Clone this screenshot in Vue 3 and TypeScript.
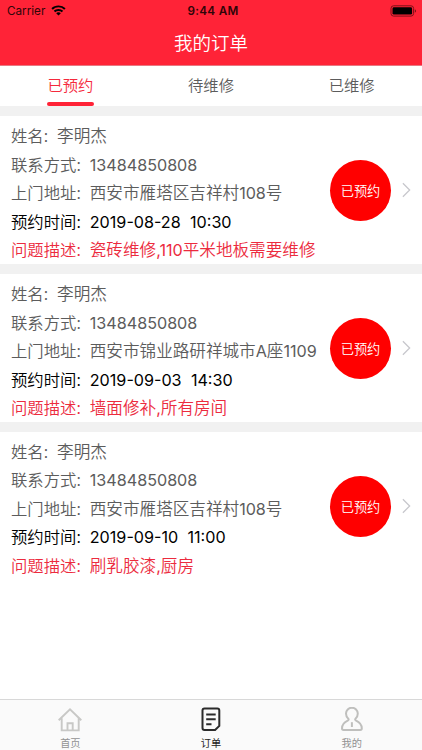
<script setup lang="ts">
interface Piece {
  text: string
  latin?: boolean
}
interface Order {
  name: string
  phone: string
  address: Piece[]
  date: string
  time: string
  issue: Piece[]
}

const tabs = ['已预约', '待维修', '已维修']

const orders: Order[] = [
  {
    name: '李明杰',
    phone: '13484850808',
    address: [{ text: '西安市雁塔区吉祥村' }, { text: '108', latin: true }, { text: '号' }],
    date: '2019-08-28',
    time: '10:30',
    issue: [{ text: '瓷砖维修' }, { text: ',110', latin: true }, { text: '平米地板需要维修' }],
  },
  {
    name: '李明杰',
    phone: '13484850808',
    address: [{ text: '西安市锦业路研祥城市' }, { text: 'A', latin: true }, { text: '座' }, { text: '1109', latin: true }],
    date: '2019-09-03',
    time: '14:30',
    issue: [{ text: '墙面修补' }, { text: ',', latin: true }, { text: '所有房间' }],
  },
  {
    name: '李明杰',
    phone: '13484850808',
    address: [{ text: '西安市雁塔区吉祥村' }, { text: '108', latin: true }, { text: '号' }],
    date: '2019-09-10',
    time: '11:00',
    issue: [{ text: '刷乳胶漆' }, { text: ',', latin: true }, { text: '厨房' }],
  },
]
</script>

<template>
  <div class="screen">
    <header class="header">
      <div class="status">
        <div class="carrier">
          <span>Carrier</span>
          <svg width="15" height="11" viewBox="0 0 15 11">
            <path d="M7.5 .4C4.7.4 2.2 1.4.4 3.2l1.4 1.5a8.1 8.1 0 0 1 11.4 0l1.4-1.5A10 10 0 0 0 7.5.4z" />
            <path d="M7.5 3.9c-1.8 0-3.5.7-4.7 1.9l1.4 1.5a4.7 4.7 0 0 1 6.6 0l1.4-1.5a6.8 6.8 0 0 0-4.7-1.9z" />
            <path d="M7.5 7.3c-.9 0-1.7.3-2.3.9l2.3 2.4 2.3-2.4c-.6-.6-1.4-.9-2.3-.9z" />
          </svg>
        </div>
        <div class="clock">9:44 AM</div>
        <svg class="battery" width="27" height="12" viewBox="0 0 27 12">
          <rect x="1" y=".8" width="22.6" height="10.3" rx="2.6" fill="none" stroke="#7d1018" stroke-width="1" />
          <rect x="2.5" y="2.3" width="19.6" height="7.3" rx="1.4" />
          <path d="M24.8 4.3c1.7.5 1.7 2.9 0 3.4z" fill="#7d1018" />
        </svg>
      </div>
      <h1 class="title">我的订单</h1>
    </header>

    <nav class="tabs">
      <div v-for="(tab, i) in tabs" :key="tab" class="tab" :class="{ active: i === 0 }">
        <span>{{ tab }}</span>
        <i class="underline"></i>
      </div>
    </nav>

    <main class="list">
      <article v-for="order in orders" :key="order.date" class="card">
        <div class="info">
          <div class="row"><span class="label">姓名:</span><span>{{ order.name }}</span></div>
          <div class="row"><span class="label">联系方式:</span><span class="latin">{{ order.phone }}</span></div>
          <div class="row">
            <span class="label">上门地址:</span>
            <span v-for="(p, i) in order.address" :key="i" :class="{ latin: p.latin }">{{ p.text }}</span>
          </div>
          <div class="row dark">
            <span class="label">预约时间:</span>
            <span class="latin">{{ order.date }}</span>
            <span class="latin time">{{ order.time }}</span>
          </div>
          <div class="row red">
            <span class="label">问题描述:</span>
            <span v-for="(p, i) in order.issue" :key="i" :class="{ latin: p.latin }">{{ p.text }}</span>
          </div>
        </div>
        <div class="action">
          <div class="badge">已预约</div>
          <svg width="10" height="18" viewBox="0 0 10 18">
            <path d="M1 1.5 8.5 9 1 16.5" fill="none" stroke="#c7c7cc" stroke-width="1.4" />
          </svg>
        </div>
      </article>
    </main>

    <footer class="tabbar">
      <div class="item">
        <svg width="26" height="26" viewBox="0 0 26 26" fill="none" stroke="#c8c8c6" stroke-width="1.9">
          <path d="M1.7 13.2 13 2.4l11.3 10.800M4.700 11.200v12.200h17V11.200M10.500 23.200v-7h5.200v7" />
        </svg>
        <span>首页</span>
      </div>
      <div class="item current">
        <svg width="26" height="26" viewBox="0 0 26 26" fill="none" stroke="#2b2b2b" stroke-width="2">
          <path d="M6.500 1.400h12.800a2 2 0 0 1 2 2v15.500l-4.200 4.100H6.500a2 2 0 0 1-2-2V3.400a2 2 0 0 1 2-2z" />
          <path d="M8.200 7.500h9.500M8.200 12.300h9.500M8.200 17.200h5.300" />
        </svg>
        <span>订单</span>
      </div>
      <div class="item">
        <svg width="26" height="26" viewBox="0 0 26 26" fill="none" stroke="#bfbfbd" stroke-width="2">
          <path d="M9.300 11.800C7.800 10.500 7 8.700 7 6.600a5.900 5.900 0 0 1 11.800 0c0 2.100-.8 3.900-2.300 5.200-.5.500-.4 1.200.2 1.500 3.700 1.700 6.100 4.900 6.100 8 0 1-.5 1.600-1.500 1.600H4.500c-1 0-1.500-.6-1.500-1.600 0-3.100 2.400-6.300 6.100-8 .6-.3.700-1 .2-1.500z" />
          <path d="M12.900 15.200v4.800" />
        </svg>
        <span>我的</span>
      </div>
    </footer>
  </div>
</template>

<style>
body {
  background: #fff;
}
</style>

<style scoped>
.screen {
  width: 422px;
  height: 750px;
  display: flex;
  flex-direction: column;
  overflow: hidden;
  font-family: "Noto Sans CJK SC", sans-serif;
  font-weight: 350;
  color: #5c5c5c;
}
.header {
  height: 65px;
  flex: none;
  background: #ff2337;
  border-bottom: 1px solid #e87882;
}
.status {
  height: 21px;
  display: grid;
  grid-template-columns: 1fr auto 1fr;
  align-items: center;
  padding: 0 5px 0 7px;
  font-family: Inter, sans-serif;
  font-size: 11.7px;
  font-weight: 400;
  color: #300508;
}
.carrier {
  display: flex;
  align-items: center;
  gap: 6px;
}
.clock {
  font-weight: 600;
  letter-spacing: 0.3px;
  padding-left: 2px;
}
.battery {
  justify-self: end;
}
.title {
  margin: 0;
  height: 44px;
  line-height: 43px;
  text-align: center;
  font-size: 18.5px;
  font-weight: 350;
  color: #fff;
}
.tabs {
  height: 40px;
  flex: none;
  display: flex;
}
.tab {
  flex: 1;
  display: flex;
  flex-direction: column;
  align-items: center;
  font-size: 15.3px;
  line-height: 36px;
}
.tab span {
  height: 36px;
}
.active {
  color: #f5293c;
}
.underline {
  width: 47px;
  height: 4px;
  border-radius: 2px;
}
.active .underline {
  background: #ff2337;
}
.list {
  flex: 1;
}
.card {
  height: 147.9px;
  border-top: 10px solid #f1f1f1;
  display: flex;
  justify-content: space-between;
  align-items: center;
  padding: 0 11px;
}
.info {
  display: flex;
  flex-direction: column;
  padding-top: 5px;
}
.row {
  display: flex;
  align-items: baseline;
  height: 28.5px;
  line-height: 28.5px;
  font-size: 16.6px;
  white-space: nowrap;
}
.label {
  font-size: 16.35px;
  margin-right: 9px;
}
.latin {
  font-family: Inter, "Noto Sans CJK SC", sans-serif;
  font-weight: 400;
  font-size: 16.15px;
}
.time {
  margin-left: 9.3px;
}
.dark {
  color: #000;
}
.red {
  color: #ec2b3e;
}
.action {
  display: flex;
  align-items: center;
  gap: 11px;
  width: 81px;
  margin-left: -40px;
  padding-top: 1px;
}
.badge {
  width: 61px;
  height: 61px;
  flex: none;
  border-radius: 50%;
  background: #f00;
  color: #fff;
  font-size: 13.2px;
  line-height: 61px;
  text-align: center;
}
.tabbar {
  height: 50px;
  flex: none;
  display: flex;
  border-top: 1px solid #d8d8d8;
  background: #fafafa;
}
.item {
  flex: 1;
  display: flex;
  flex-direction: column;
  align-items: center;
  padding-top: 7px;
  font-size: 10.2px;
  line-height: 20px;
  font-weight: 400;
  color: #929292;
}
.item svg {
  flex: none;
}
.current {
  color: #222;
}
</style>
